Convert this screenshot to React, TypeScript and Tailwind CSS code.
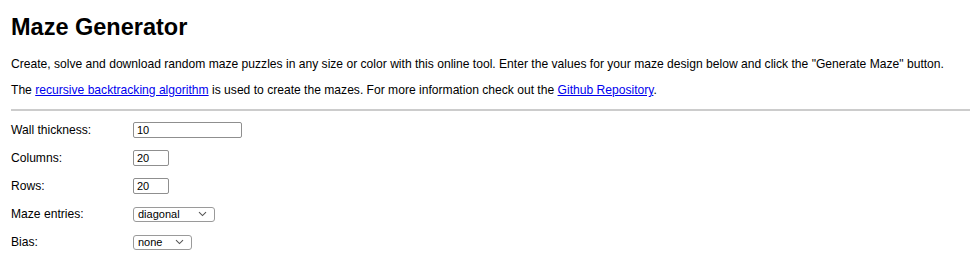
import React from "react";

function Chevron() {
  return (
    <svg width="9" height="6" viewBox="0 0 9 6" className="absolute right-[7px] top-1/2 -translate-y-1/2">
      <path d="M1 1.2 L4.5 4.6 L8 1.2" fill="none" stroke="#555" strokeWidth="1.1" />
    </svg>
  );
}

function Field({ label, children }: { label: string; children: React.ReactNode }) {
  return (
    <div className="flex items-center h-[28px]">
      <label className="w-[122px] text-[12.1px] text-black">{label}</label>
      {children}
    </div>
  );
}

function TextInput({ value, width }: { value: string; width: string }) {
  return (
    <div className={`${width} h-[16px] border border-[#8f8f8f] rounded-[2px] bg-white flex items-center px-[3px] text-[11px] leading-none text-black`}>
      {value}
    </div>
  );
}

function Select({ value, width }: { value: string; width: string }) {
  return (
    <div className={`${width} relative h-[15px] border border-[#9a9a9a] rounded-[3px] bg-white flex items-center px-[4px] text-[11px] leading-none text-black`}>
      {value}
      <Chevron />
    </div>
  );
}

export default function App() {
  return (
    <div className="min-h-screen bg-white pl-[11px] font-['Liberation_Sans',Arial,sans-serif] text-black">
      <h1 className="pt-[13px] text-[23.5px] leading-[28px] font-bold">Maze Generator</h1>

      <p className="mt-[15px] text-[12.1px] leading-[16px]">
        Create, solve and download random maze puzzles in any size or color with this online tool. Enter the values for your maze design below and click the "Generate Maze" button.
      </p>
      <p className="mt-[10px] text-[12.1px] leading-[16px]">
        The{" "}
        <a href="#" className="text-[#0000ee] underline">recursive backtracking algorithm</a>{" "}
        is used to create the mazes. For more information check out the{" "}
        <a href="#" className="text-[#0000ee] underline">Github Repository</a>.
      </p>

      <hr className="mt-[11px] border-0 border-t-2 border-[#cccccc]" />

      <div className="mt-[5px] flex flex-col">
        <Field label="Wall thickness:">
          <TextInput value="10" width="w-[109px]" />
        </Field>
        <Field label="Columns:">
          <TextInput value="20" width="w-[36px]" />
        </Field>
        <Field label="Rows:">
          <TextInput value="20" width="w-[36px]" />
        </Field>
        <Field label="Maze entries:">
          <Select value="diagonal" width="w-[82px]" />
        </Field>
        <Field label="Bias:">
          <Select value="none" width="w-[59px]" />
        </Field>
      </div>
    </div>
  );
}
